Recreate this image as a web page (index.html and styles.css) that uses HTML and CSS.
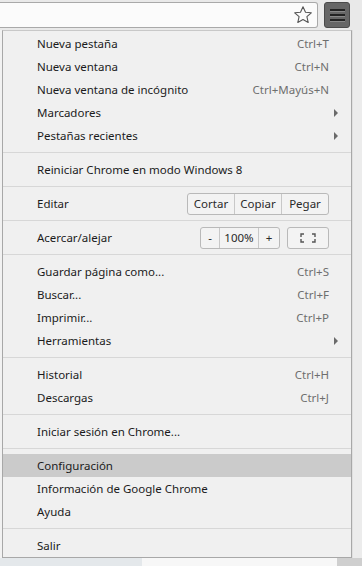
FILE: index.html
```html
<!DOCTYPE html>
<html lang="es">
<head>
    <meta charset="UTF-8">
    <title>Menú de Chrome</title>
    <link rel="stylesheet" href="styles.css">
</head>
<body>
    <div class="toolbar">
        <div class="omnibox">
            <svg class="star" width="20" height="20" viewBox="0 0 20 20">
                <path d="M10 1.8l2.5 5.4 5.8.6-4.4 3.9 1.3 5.8L10 14.5l-5.2 3 1.3-5.8L1.7 7.8l5.8-.6z" fill="none" stroke="#555" stroke-width="1.1" stroke-linejoin="round"/>
            </svg>
        </div>
        <div class="menu-btn">
            <span></span><span></span><span></span>
        </div>
        <div class="toolbar-rest"></div>
    </div>

    <div class="stage">
        <div class="menu">
            <div class="item"><span>Nueva pestaña</span><span class="key">Ctrl+T</span></div>
            <div class="item"><span>Nueva ventana</span><span class="key">Ctrl+N</span></div>
            <div class="item"><span>Nueva ventana de incógnito</span><span class="key">Ctrl+Mayús+N</span></div>
            <div class="item"><span>Marcadores</span><span class="arrow"></span></div>
            <div class="item"><span>Pestañas recientes</span><span class="arrow"></span></div>
            <div class="sep"></div>
            <div class="item"><span>Reiniciar Chrome en modo Windows 8</span></div>
            <div class="sep"></div>
            <div class="item">
                <span>Editar</span>
                <div class="group">
                    <span class="btn w-cut">Cortar</span><span class="btn w-copy">Copiar</span><span class="btn w-paste">Pegar</span>
                </div>
            </div>
            <div class="sep"></div>
            <div class="item">
                <span>Acercar/alejar</span>
                <div class="zoom-tools">
                    <div class="group">
                        <span class="btn w-minus">-</span><span class="btn w-pct">100%</span><span class="btn w-plus">+</span>
                    </div>
                    <div class="group">
                        <span class="btn w-full">
                            <svg width="16" height="10" viewBox="0 0 16 10">
                                <path d="M1 4V1h3M12 1h3v3M15 6v3h-3M4 9H1V6" fill="none" stroke="#555" stroke-width="1.4"/>
                            </svg>
                        </span>
                    </div>
                </div>
            </div>
            <div class="sep"></div>
            <div class="item"><span>Guardar página como...</span><span class="key">Ctrl+S</span></div>
            <div class="item"><span>Buscar...</span><span class="key">Ctrl+F</span></div>
            <div class="item"><span>Imprimir...</span><span class="key">Ctrl+P</span></div>
            <div class="item"><span>Herramientas</span><span class="arrow"></span></div>
            <div class="sep"></div>
            <div class="item"><span>Historial</span><span class="key">Ctrl+H</span></div>
            <div class="item"><span>Descargas</span><span class="key">Ctrl+J</span></div>
            <div class="sep"></div>
            <div class="item"><span>Iniciar sesión en Chrome...</span></div>
            <div class="sep"></div>
            <div class="item active"><span>Configuración</span></div>
            <div class="item"><span>Información de Google Chrome</span></div>
            <div class="item"><span>Ayuda</span></div>
            <div class="sep"></div>
            <div class="item"><span>Salir</span></div>
        </div>
        <div class="side"></div>
    </div>
    <div class="page-bottom">
        <div class="pb-left"></div>
        <div class="pb-mid"></div>
        <div class="pb-right"></div>
    </div>
</body>
</html>
```

FILE: styles.css
```css
body {
    margin: 0;
    padding: 0;
    width: 362px;
    height: 566px;
    overflow: hidden;
    background-color: #f2f2f2;
    font-family: "Noto Sans", "Open Sans", sans-serif;
    font-size: 11.5px;
    color: #1b1b1b;
}
.toolbar {
    display: flex;
    height: 30px;
    background-color: #e9e9e9;
    box-sizing: border-box;
    padding-top: 2px;
}
.omnibox {
    width: 318px;
    height: 26px;
    box-sizing: border-box;
    background-color: #fbfbfb;
    border: 1px solid #a9a9a9;
    border-left: none;
    border-radius: 0 3px 3px 0;
    display: flex;
    justify-content: flex-end;
    align-items: center;
    padding-right: 4px;
}
.menu-btn {
    width: 26px;
    height: 26px;
    margin-left: 6px;
    box-sizing: border-box;
    background-color: #666;
    border: 1px solid #4a4a4a;
    border-radius: 3px;
    display: flex;
    flex-direction: column;
    justify-content: center;
    align-items: center;
    gap: 2px;
}
.menu-btn span {
    width: 15px;
    height: 2px;
    background-color: #222;
    border-bottom: 1px solid #888;
}
.toolbar-rest {
    flex: 1;
}
.stage {
    display: flex;
    height: 528px;
}
.menu {
    width: 350px;
    margin-left: 2px;
    box-sizing: border-box;
    background-color: #f0f0f0;
    border: 1px solid #a8a8a8;
    border-top-color: #c8c8c8;
    padding: 1px 0 0;
}
.side {
    flex: 1;
    border-left: 1px solid #e0e0e0;
    background-color: #ececec;
}
.item {
    display: flex;
    justify-content: space-between;
    align-items: center;
    height: 23px;
    padding: 0 22px 0 34px;
}
.item.active {
    background-color: #cbcbcb;
}
.key {
    color: #6e6e6e;
}
.arrow {
    width: 0;
    height: 0;
    margin-right: -9px;
    border-top: 4px solid transparent;
    border-bottom: 4px solid transparent;
    border-left: 4px solid #6a6a6a;
}
.sep {
    height: 1px;
    margin: 5px 0;
    background-color: #d7d7d7;
}
.group {
    display: flex;
    height: 22px;
    box-sizing: border-box;
    border: 1px solid #b9b9b9;
    border-radius: 3px;
    background-color: #f3f3f3;
}
.btn {
    display: flex;
    justify-content: center;
    align-items: center;
    border-left: 1px solid #c8c8c8;
    color: #2a2a2a;
}
.btn:first-child {
    border-left: none;
}
.zoom-tools {
    display: flex;
    gap: 7px;
}
.w-cut { width: 46px; }
.w-copy { width: 46px; }
.w-paste { width: 46px; }
.w-minus { width: 18px; }
.w-pct { width: 38px; }
.w-plus { width: 20px; }
.w-full { width: 40px; }
.page-bottom {
    display: flex;
    height: 8px;
}
.pb-left {
    width: 142px;
    background-color: #e4e8eb;
}
.pb-mid {
    width: 195px;
    background-color: #f7f7f7;
}
.pb-right {
    flex: 1;
    background-color: #cfcfcf;
}
```
